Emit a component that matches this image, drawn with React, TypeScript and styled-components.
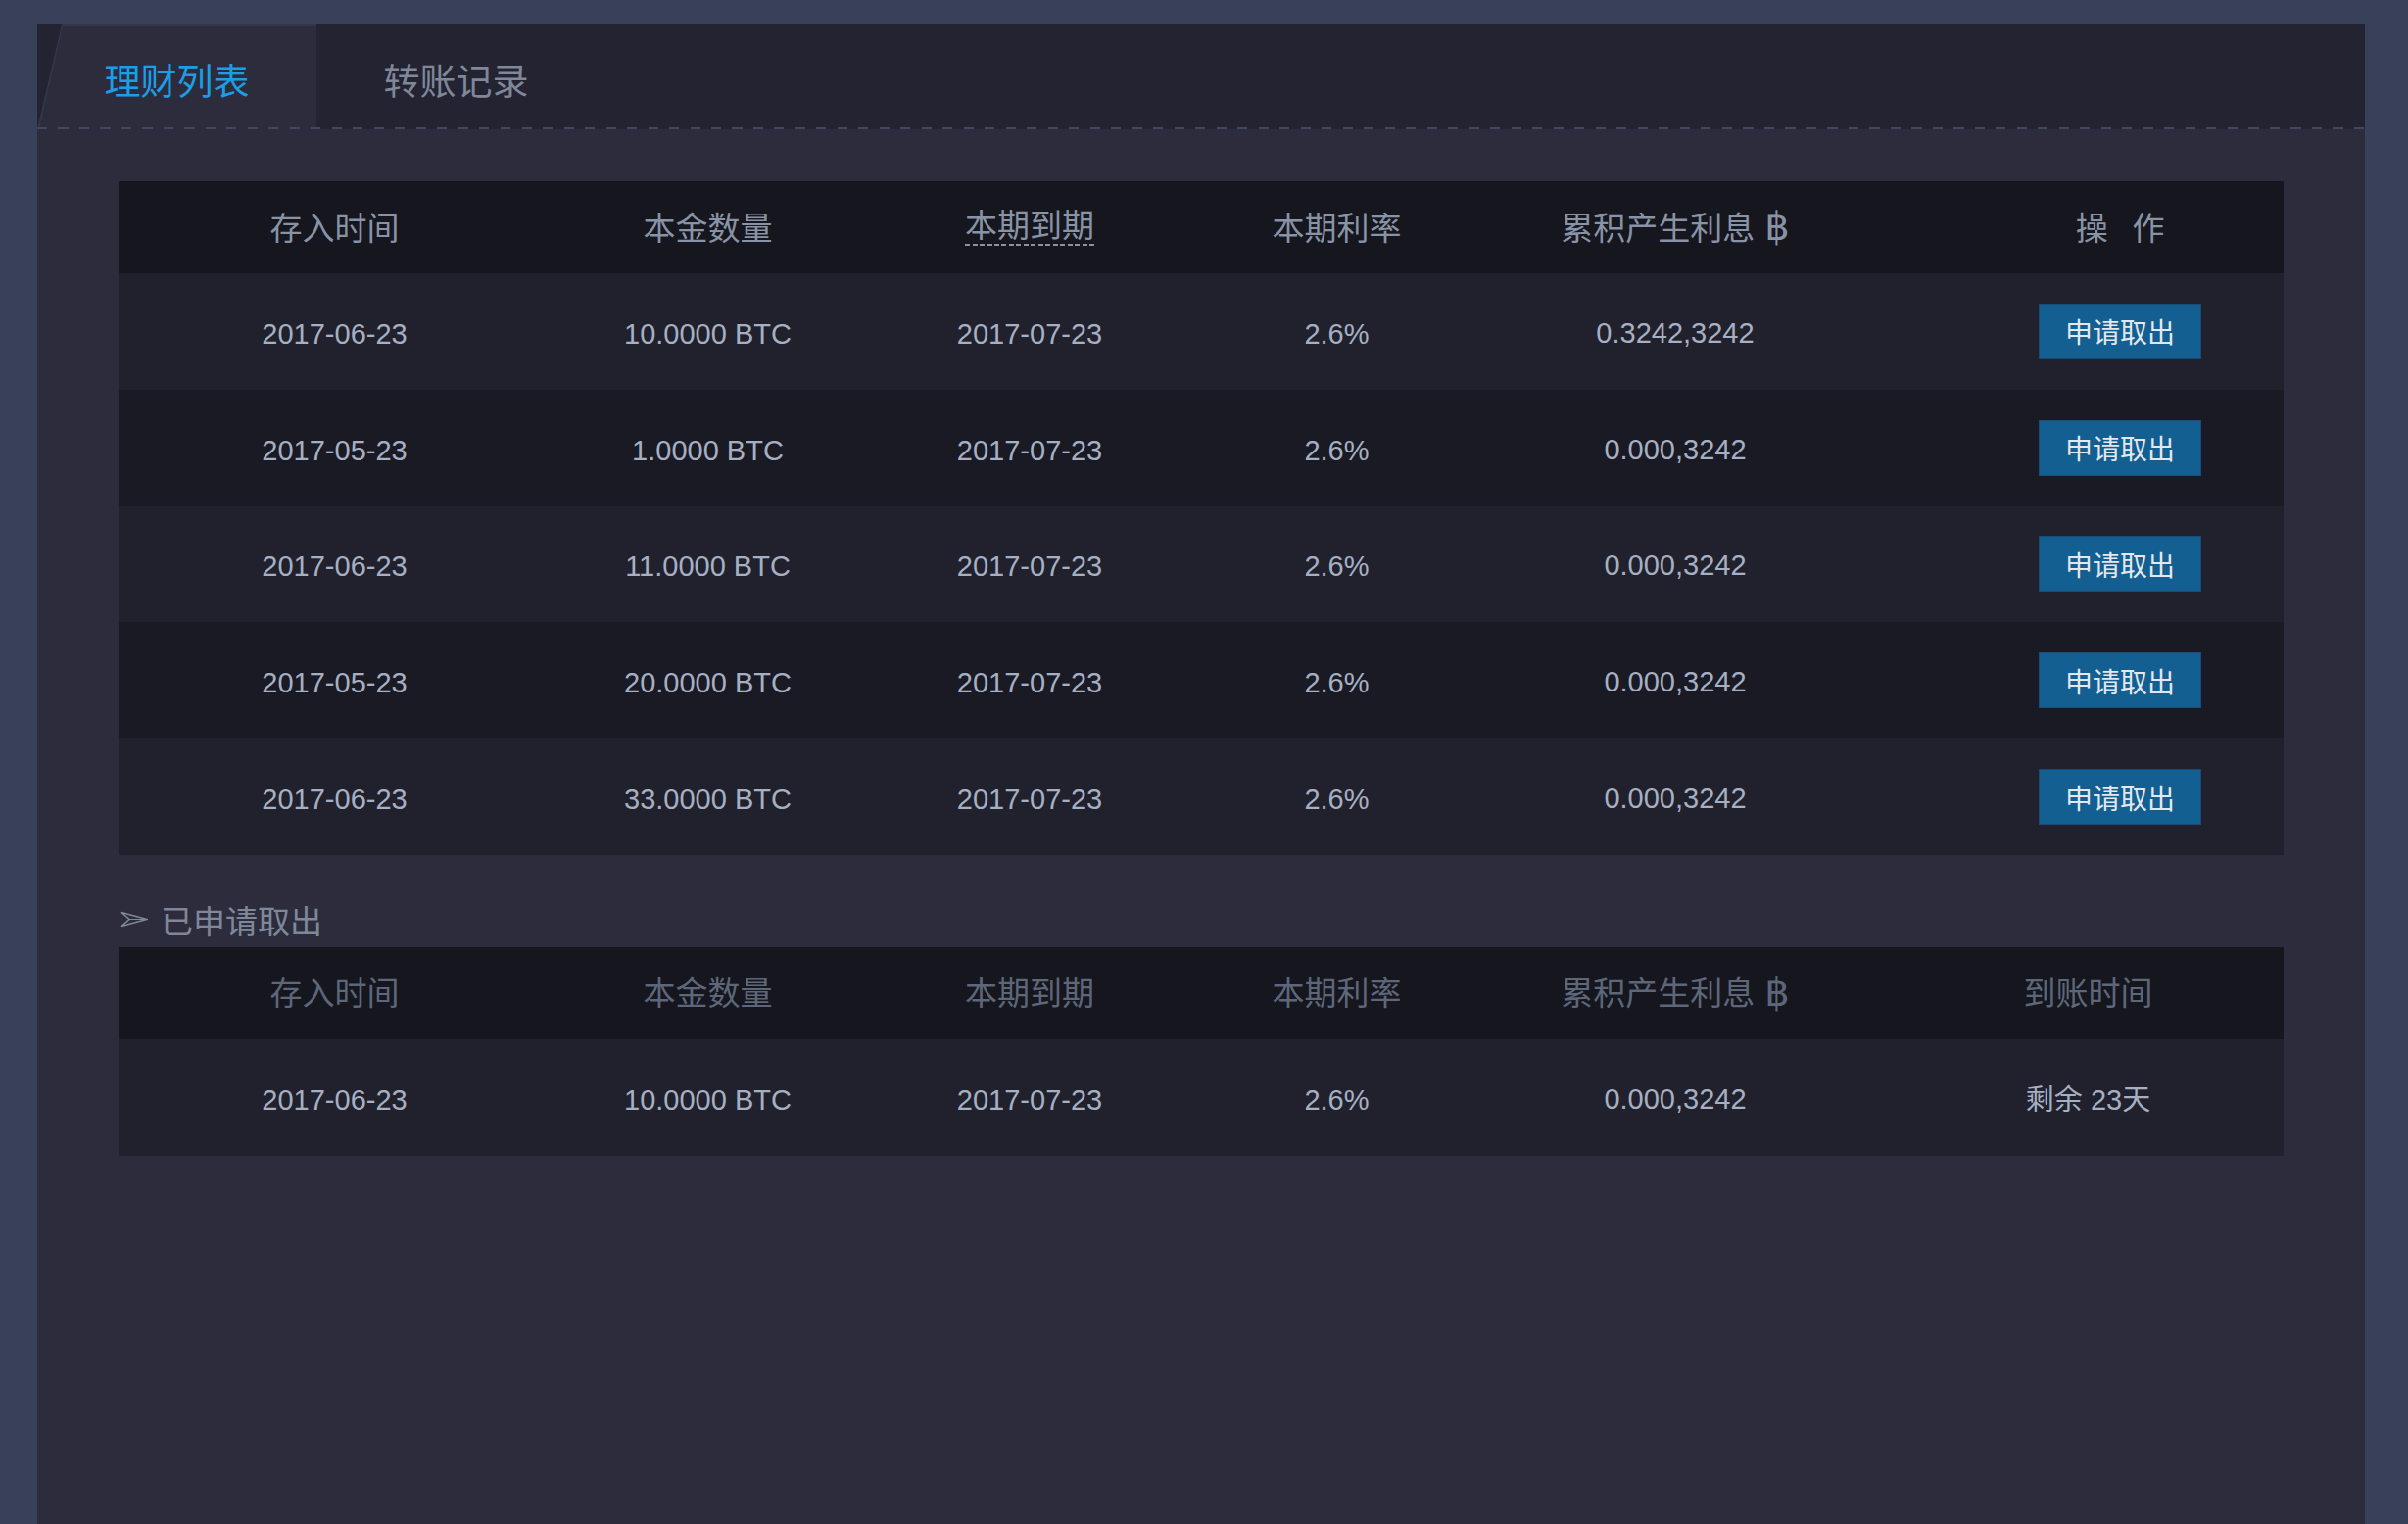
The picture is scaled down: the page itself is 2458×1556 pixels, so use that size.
import React from "react";
import styled, { createGlobalStyle } from "styled-components";

const GlobalStyle = createGlobalStyle`
  html, body { margin: 0; padding: 0; background: #394059; }
  body { font-family: "Liberation Sans", "Noto Sans CJK SC", sans-serif; }
  * { box-sizing: border-box; }
`;

const Page = styled.div`
  min-height: 100vh;
  padding: 25px 44px 0 38px;
  display: flex;
  flex-direction: column;
`;

const Panel = styled.div`
  flex: 1;
  display: flex;
  flex-direction: column;
`;

const TabBar = styled.div`
  display: flex;
  height: 107px;
  position: relative;
  background: #242332;
  &::after {
    content: "";
    position: absolute;
    left: 0;
    right: 0;
    bottom: 0;
    height: 2px;
    background: repeating-linear-gradient(90deg, #3d4866 0 10px, transparent 10px 21.5px);
  }
`;

const Tab = styled.div<{ $active?: boolean }>`
  width: 285px;
  display: flex;
  align-items: center;
  justify-content: center;
  padding-top: 4px;
  font-family: "Noto Sans CJK SC", sans-serif;
  font-size: 37px;
  color: ${(p) => (p.$active ? "#1a9fe6" : "#7e8898")};
  position: relative;
  background: ${(p) => (p.$active ? "#35364a" : "transparent")};
  clip-path: ${(p) => (p.$active ? "polygon(25px 0, 100% 0, 100% 100%, 0 100%)" : "none")};
  ${(p) =>
    p.$active
      ? `
  &::before {
    content: "";
    position: absolute;
    inset: 2px 0 0 2px;
    background: #2d2c3d;
    clip-path: polygon(24px 0, 100% 0, 100% 100%, 0 100%);
  }`
      : ""}
`;

const TabLabel = styled.span`
  position: relative;
`;

const TabFill = styled.div`
  flex: 1;
`;

const Body = styled.div`
  flex: 1;
  background: #2d2c3d;
  padding: 53px 83px 60px 83px;
`;

const Table = styled.div``;

const Row = styled.div<{ $kind: "head" | "odd" | "even" }>`
  display: grid;
  grid-template-columns: 441px 321px 336px 291px 400px 1fr;
  align-items: center;
  height: ${(p) => (p.$kind === "head" ? "94px" : "118.8px")};
  background: ${(p) =>
    p.$kind === "head" ? "#16161f" : p.$kind === "odd" ? "#21212d" : "#1a1a25"};
`;

const HeadCell = styled.div<{ $dim?: boolean; $shift?: number }>`
  display: flex;
  justify-content: center;
  align-items: center;
  font-family: "Noto Sans CJK SC", sans-serif;
  font-size: 33px;
  line-height: 1;
  margin-top: -2px;
  color: ${(p) => (p.$dim ? "#5d6779" : "#8893a5")};
  padding-left: ${(p) => p.$shift ?? 0}px;
`;

const Cell = styled.div<{ $shift?: number; $raise?: boolean }>`
  text-align: center;
  font-size: 29px;
  line-height: 1;
  color: #a6b0c2;
  padding-left: ${(p) => p.$shift ?? 0}px;
  margin-top: ${(p) => (p.$raise ? "4px" : "6px")};
  display: flex;
  justify-content: center;
`;

const ButtonCell = styled.div<{ $shift?: number }>`
  display: flex;
  justify-content: center;
  padding-left: ${(p) => p.$shift ?? 0}px;
`;

const Dotted = styled.span`
  display: inline-block;
  padding-bottom: 6px;
  background: repeating-linear-gradient(90deg, #8893a5 0 5px, transparent 5px 7.5px) bottom left / 100% 2px no-repeat;
`;

const Spaced = styled.span`
  letter-spacing: 0.75em;
  margin-right: -0.75em;
`;

const Baht = styled.span`
  font-family: "DejaVu Sans", "Liberation Sans", sans-serif;
  font-size: 40px;
  line-height: 1;
  margin-left: 10px;
`;

const ActionButton = styled.button`
  width: 166px;
  height: 57px;
  background: #145f92;
  border: 1px solid #1b4a73;
  color: #e4e8ee;
  font-family: "Noto Sans CJK SC", sans-serif;
  font-size: 28px;
  padding: 0;
  cursor: pointer;
`;

const SectionTitle = styled.div`
  display: flex;
  align-items: center;
  height: 40px;
  margin: 46px 0 8px;
  padding-left: 2px;
  gap: 13px;
  font-family: "Noto Sans CJK SC", sans-serif;
  font-size: 33px;
  color: #7f8898;
`;

const rows = [
  { d: "2017-06-23", a: "10.0000 BTC", i: "0.3242,3242" },
  { d: "2017-05-23", a: "1.0000 BTC", i: "0.000,3242" },
  { d: "2017-06-23", a: "11.0000 BTC", i: "0.000,3242" },
  { d: "2017-05-23", a: "20.0000 BTC", i: "0.000,3242" },
  { d: "2017-06-23", a: "33.0000 BTC", i: "0.000,3242" },
];

const Arrow = () => (
  <svg width="28" height="17" viewBox="0 0 28 17">
    <path d="M1 1.5 L27 8.5 L1 15.5 L9 8.5 Z" fill="none" stroke="#7f8898" strokeWidth="1.6" strokeLinejoin="miter" />
    <path d="M9 8.5 L27 8.5" stroke="#7f8898" strokeWidth="1" />
  </svg>
);

export default function App() {
  return (
    <>
      <GlobalStyle />
      <Page>
        <Panel>
          <TabBar>
            <Tab $active>
              <TabLabel>理财列表</TabLabel>
            </Tab>
            <Tab>
              <TabLabel>转账记录</TabLabel>
            </Tab>
            <TabFill />
          </TabBar>
          <Body>
            <Table>
              <Row $kind="head">
                <HeadCell>存入时间</HeadCell>
                <HeadCell>本金数量</HeadCell>
                <HeadCell>
                  <Dotted>本期到期</Dotted>
                </HeadCell>
                <HeadCell>本期利率</HeadCell>
                <HeadCell>
                  累积产生利息<Baht>฿</Baht>
                </HeadCell>
                <HeadCell $shift={87}>
                  <Spaced>操作</Spaced>
                </HeadCell>
              </Row>
              {rows.map((r, idx) => (
                <Row key={idx} $kind={idx % 2 === 0 ? "odd" : "even"}>
                  <Cell>{r.d}</Cell>
                  <Cell>{r.a}</Cell>
                  <Cell>2017-07-23</Cell>
                  <Cell>2.6%</Cell>
                  <Cell $raise>{r.i}</Cell>
                  <ButtonCell $shift={87}>
                    <ActionButton>申请取出</ActionButton>
                  </ButtonCell>
                </Row>
              ))}
            </Table>
            <SectionTitle>
              <Arrow />
              <span>已申请取出</span>
            </SectionTitle>
            <Table>
              <Row $kind="head">
                <HeadCell $dim>存入时间</HeadCell>
                <HeadCell $dim>本金数量</HeadCell>
                <HeadCell $dim>本期到期</HeadCell>
                <HeadCell $dim>本期利率</HeadCell>
                <HeadCell $dim>
                  累积产生利息<Baht>฿</Baht>
                </HeadCell>
                <HeadCell $dim $shift={22}>
                  到账时间
                </HeadCell>
              </Row>
              <Row $kind="odd">
                <Cell>2017-06-23</Cell>
                <Cell>10.0000 BTC</Cell>
                <Cell>2017-07-23</Cell>
                <Cell>2.6%</Cell>
                <Cell $raise>0.000,3242</Cell>
                <Cell $shift={22}>剩余 23天</Cell>
              </Row>
            </Table>
          </Body>
        </Panel>
      </Page>
    </>
  );
}
